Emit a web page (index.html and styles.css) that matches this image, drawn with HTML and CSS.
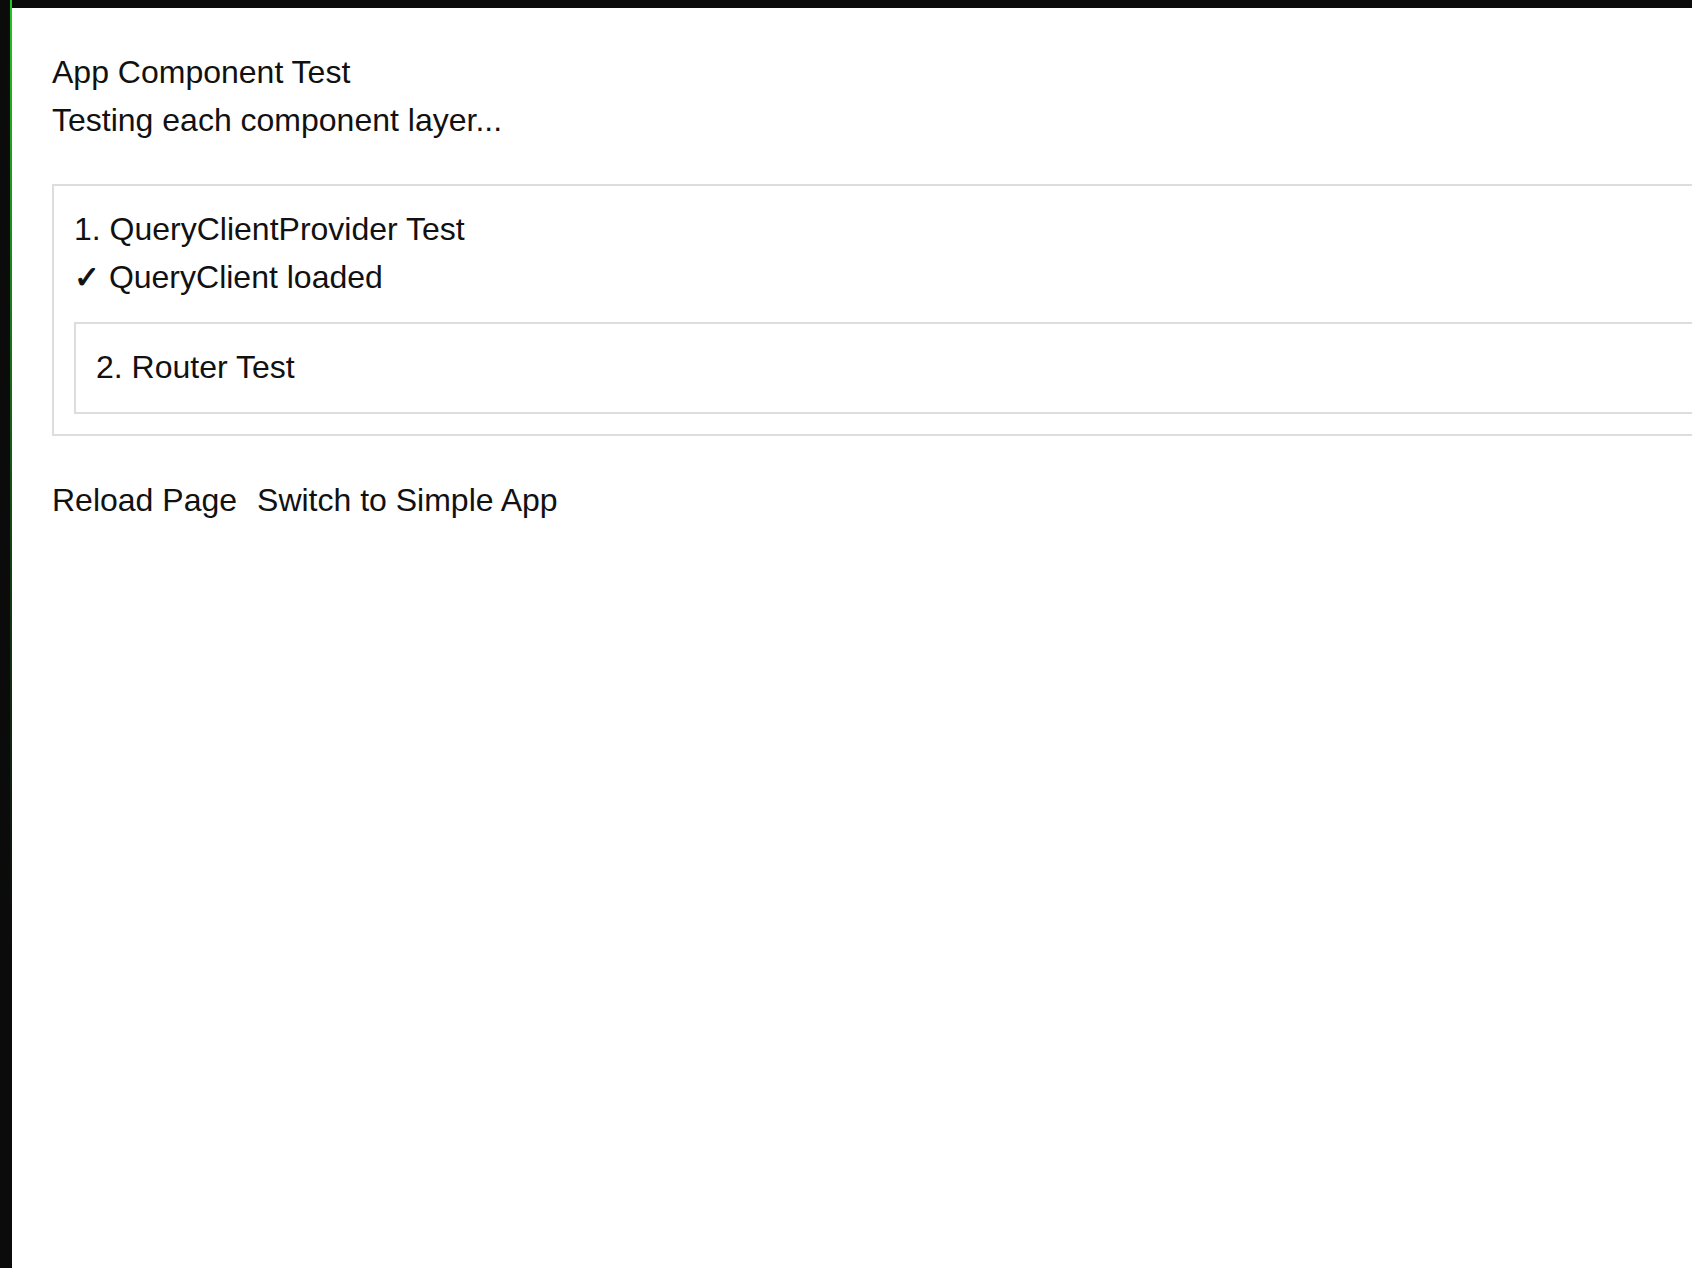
FILE: index.html
```html
<!DOCTYPE html>
<html lang="en">
<head>
<meta charset="utf-8">
<title>App Component Test</title>
<link rel="stylesheet" href="styles.css">
</head>
<body>
<div class="frame">
  <div class="edge"></div>
  <div class="glow"></div>
  <main class="page">
    <h1 class="title">App Component Test</h1>
    <p class="subtitle">Testing each component layer...</p>
    <section class="panel panel-outer">
      <h2 class="panel-title">1. QueryClientProvider Test</h2>
      <p class="status"><span class="check">✓</span> QueryClient loaded</p>
      <section class="panel panel-inner">
        <h2 class="panel-title">2. Router Test</h2>
      </section>
    </section>
    <div class="actions">
      <button class="action" type="button">Reload Page</button>
      <button class="action" type="button">Switch to Simple App</button>
    </div>
  </main>
</div>
</body>
</html>
```
FILE: styles.css
```css
html, body {
  margin: 0;
  padding: 0;
  height: 100%;
  overflow: hidden;
}
body {
  background: #0b0b0b;
  font-family: "Liberation Sans", Arial, sans-serif;
  color: #111;
}
.frame {
  display: flex;
  min-height: 100vh;
  background: #0b0b0b;
}
.edge {
  width: 10px;
  flex: none;
}
.glow {
  width: 2px;
  flex: none;
  background: linear-gradient(#22c622 0%, #1a7a1a 25%, #143d14 45%, #0b0b0b 75%);
}
.page {
  flex: 1;
  min-width: 0;
  margin-top: 8px;
  background: #fff;
  padding: 41px 0 0 40px;
  font-size: 32px;
  line-height: 47.5px;
  overflow: hidden;
}
.title,
.subtitle,
.panel-title,
.status {
  margin: 0;
  font-size: inherit;
  font-weight: normal;
  line-height: inherit;
}
.panel {
  border: 2px solid #dddddd;
  padding: 20px;
}
.panel-outer {
  margin-top: 40px;
  margin-right: -80px;
}
.panel-inner {
  margin-top: 21px;
  margin-right: -80px;
}
.check {
  font-family: "DejaVu Sans", sans-serif;
  font-size: 31px;
  -webkit-text-stroke: 0.9px #111;
}
.actions {
  margin-top: 41px;
  display: flex;
  gap: 20px;
}
.action {
  background: none;
  border: none;
  padding: 0;
  margin: 0;
  font-family: inherit;
  font-size: inherit;
  line-height: inherit;
  color: #111;
  cursor: pointer;
}
```
